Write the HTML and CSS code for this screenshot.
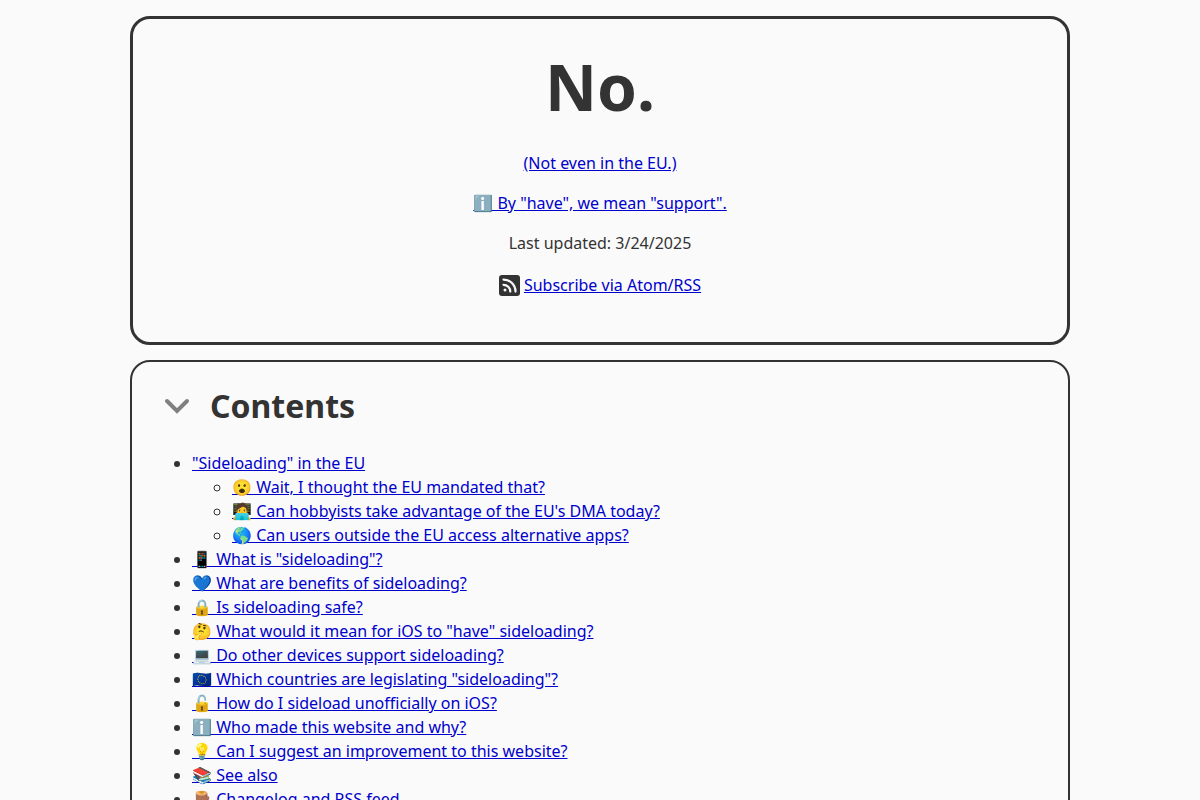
FILE: index.html
```
<!DOCTYPE html>
<html lang="en">

<head>
    <meta charset="UTF-8">
    <meta name="viewport" content="width=device-width, initial-scale=1.0">
    <title>Does iOS have sideloading yet?</title>
    <link rel="stylesheet" href="styles.css">
</head>

<body>
    <main>
        <header class="answer">
            <h1>No.</h1>
            <p><a href="#eu">(Not even in the EU.)</a></p>
            <p><a href="#have">ℹ️ By "have", we mean "support".</a></p>
            <p>Last updated: 3/24/2025</p>
            <p class="feed">
                <svg class="feed-icon" viewBox="0 0 448 448" aria-hidden="true">
                    <rect width="448" height="448" rx="64" fill="#333"/>
                    <circle cx="128" cy="320" r="32" fill="#fafafa"/>
                    <path d="M96 208a144 144 0 0 1 144 144M96 96a256 256 0 0 1 256 256" fill="none" stroke="#fafafa" stroke-width="48" stroke-linecap="round"/>
                </svg>
                <a href="#changelog">Subscribe via Atom/RSS</a>
            </p>
        </header>

        <details class="contents" open>
            <summary>
                <svg class="chevron" viewBox="0 0 26 26" aria-hidden="true">
                    <path d="M3 8l10 10L23 8" fill="none" stroke="#808080" stroke-width="4" stroke-linecap="round"/>
                </svg>
                <h2>Contents</h2>
            </summary>
            <ul>
                <li><a href="#eu">"Sideloading" in the EU</a>
                    <ul>
                        <li><a href="#mandate">😮 Wait, I thought the EU mandated that?</a></li>
                        <li><a href="#hobbyists">🧑‍💻 Can hobbyists take advantage of the EU's DMA today?</a></li>
                        <li><a href="#outside">🌎 Can users outside the EU access alternative apps?</a></li>
                    </ul>
                </li>
                <li><a href="#what">📱 What is "sideloading"?</a></li>
                <li><a href="#benefits">💙 What are benefits of sideloading?</a></li>
                <li><a href="#safe">🔒 Is sideloading safe?</a></li>
                <li><a href="#have">🤔 What would it mean for iOS to "have" sideloading?</a></li>
                <li><a href="#devices">💻 Do other devices support sideloading?</a></li>
                <li><a href="#countries">🇪🇺 Which countries are legislating "sideloading"?</a></li>
                <li><a href="#unofficial">🔓 How do I sideload unofficially on iOS?</a></li>
                <li><a href="#who">ℹ️ Who made this website and why?</a></li>
                <li><a href="#suggest">💡 Can I suggest an improvement to this website?</a></li>
                <li><a href="#see-also">📚 See also</a></li>
                <li><a href="#changelog">🪵 Changelog and RSS feed</a></li>
            </ul>
        </details>
    </main>
</body>

</html>
```
FILE: styles.css
```
body {
    margin: 0;
    background-color: #fafafa;
    color: #333;
    font-family: "Noto Sans", sans-serif;
    font-size: 16px;
    line-height: 24px;
}

main {
    box-sizing: border-box;
    max-width: 940px;
    margin: 16px auto;
}

a {
    color: #0000cc;
}

.answer {
    border: 3px solid #333;
    border-radius: 20px;
    padding: 20px 32px 27px;
    text-align: center;
}

.answer h1 {
    margin: 0 0 16px;
    font-size: 64px;
    line-height: 96px;
}

.answer p {
    margin: 0 0 16px;
}

.answer .feed {
    display: flex;
    align-items: center;
    justify-content: center;
    gap: 4px;
    line-height: 28px;
}

.feed-icon {
    width: 21px;
    height: 21px;
}

.contents {
    margin-top: 15px;
    border: 2px solid #333;
    border-radius: 20px;
    padding: 20px 32px;
}

.contents summary {
    display: flex;
    align-items: center;
    gap: 20px;
    list-style: none;
    cursor: pointer;
}

.contents h2 {
    margin: 0;
    font-size: 32px;
    line-height: 48px;
}

.chevron {
    width: 26px;
    height: 26px;
}

ul {
    margin: 0;
    padding-left: 40px;
}

.contents > ul {
    margin-top: 21px;
    padding-left: 28px;
}
```
